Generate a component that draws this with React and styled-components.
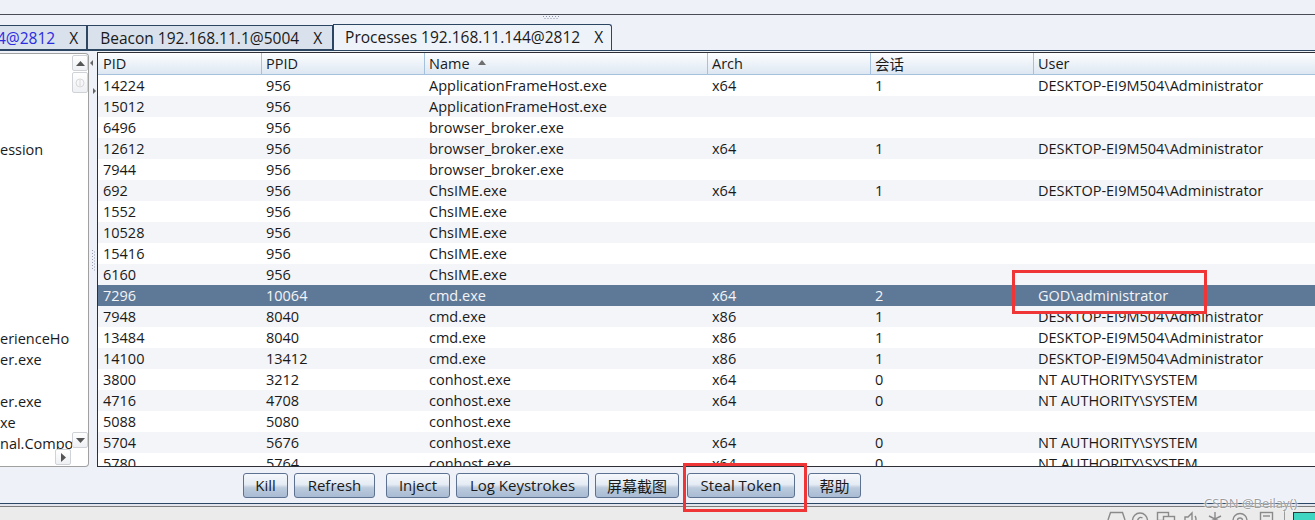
import React from 'react';
import styled, { createGlobalStyle } from 'styled-components';

const UI_FONT = `"Open Sans", "Noto Sans CJK SC", sans-serif`;

const GlobalStyle = createGlobalStyle`
  html, body { margin: 0; padding: 0; }
  body { background: #eef1f8; font-family: ${UI_FONT}; }
`;

const DESK = 'DESKTOP-EI9M504\\Administrator';
const NT = 'NT AUTHORITY\\SYSTEM';

const processes = [
  ['14224', '956', 'ApplicationFrameHost.exe', 'x64', '1', DESK],
  ['15012', '956', 'ApplicationFrameHost.exe', '', '', ''],
  ['6496', '956', 'browser_broker.exe', '', '', ''],
  ['12612', '956', 'browser_broker.exe', 'x64', '1', DESK],
  ['7944', '956', 'browser_broker.exe', '', '', ''],
  ['692', '956', 'ChsIME.exe', 'x64', '1', DESK],
  ['1552', '956', 'ChsIME.exe', '', '', ''],
  ['10528', '956', 'ChsIME.exe', '', '', ''],
  ['15416', '956', 'ChsIME.exe', '', '', ''],
  ['6160', '956', 'ChsIME.exe', '', '', ''],
  ['7296', '10064', 'cmd.exe', 'x64', '2', 'GOD\\administrator'],
  ['7948', '8040', 'cmd.exe', 'x86', '1', DESK],
  ['13484', '8040', 'cmd.exe', 'x86', '1', DESK],
  ['14100', '13412', 'cmd.exe', 'x86', '1', DESK],
  ['3800', '3212', 'conhost.exe', 'x64', '0', NT],
  ['4716', '4708', 'conhost.exe', 'x64', '0', NT],
  ['5088', '5080', 'conhost.exe', '', '', ''],
  ['5704', '5676', 'conhost.exe', 'x64', '0', NT],
  ['5780', '5764', 'conhost.exe', 'x64', '0', NT],
];

const SELECTED = 10;

const listItems = ['', '', '', '', 'ession', '', '', '', '', '', '', '', '', 'erienceHo', 'er.exe', '', 'er.exe', 'xe', 'nal.Compo'];

const buttons = [
  { label: 'Kill', w: 45, ml: 0 },
  { label: 'Refresh', w: 81, ml: 6 },
  { label: 'Inject', w: 64, ml: 11 },
  { label: 'Log Keystrokes', w: 133, ml: 6 },
  { label: '屏幕截图', w: 84, ml: 6 },
  { label: 'Steal Token', w: 108, ml: 8 },
  { label: '帮助', w: 53, ml: 13 },
];

export default function App() {
  return (
    <Frame>
      <GlobalStyle />
      <TopStrip />
      <GripRow>
        <svg width="17" height="3">
          {[0, 3, 6, 9, 12, 15].map(x => (
            <rect key={x} x={x} y="0" width="1" height="1" fill="#8d93a6" />
          ))}
          {[1.5, 4.5, 7.5, 10.5, 13.5].map(x => (
            <rect key={x} x={x} y="2" width="1" height="1" fill="#8d93a6" />
          ))}
        </svg>
      </GripRow>

      <TabBar>
        <Tab $first>
          <TabLabel $blue>4@2812</TabLabel>
          <TabClose>X</TabClose>
        </Tab>
        <Tab>
          <TabLabel>Beacon 192.168.11.1@5004</TabLabel>
          <TabClose>X</TabClose>
        </Tab>
        <Tab $active>
          <TabLabel>Processes 192.168.11.144@2812</TabLabel>
          <TabClose>X</TabClose>
        </Tab>
      </TabBar>

      <Main>
        <ListBox>
          <ListBody>
            <ListItems>
              {listItems.map((t, i) => (
                <ListItem key={i}>{t}</ListItem>
              ))}
            </ListItems>
            <VScroll>
              <ScrollBtn>
                <svg width="9" height="5"><path d="M0 5 L4.5 0 L9 5 Z" fill="#555" /></svg>
              </ScrollBtn>
              <Thumb>
                <svg width="10" height="10">
                  <circle cx="5" cy="5" r="4" fill="none" stroke="#d8d8d8" />
                  <line x1="5" y1="2" x2="5" y2="8" stroke="#d8d8d8" />
                </svg>
              </Thumb>
              <Track />
              <ScrollBtn>
                <svg width="9" height="5"><path d="M0 0 L4.5 5 L9 0 Z" fill="#555" /></svg>
              </ScrollBtn>
            </VScroll>
          </ListBody>
          <HScroll>
            <Track />
            <ScrollBtn>
              <svg width="5" height="9"><path d="M0 0 L5 4.5 L0 9 Z" fill="#555" /></svg>
            </ScrollBtn>
            <Corner />
          </HScroll>
        </ListBox>

        <Splitter>
          <svg width="8" height="415">
            <path d="M4 8 L1 11 L4 14 Z" fill="#666" />
            <path d="M4 36 L7 39 L4 42 Z" fill="#666" />
            {[0, 3, 6, 9, 12, 15, 18].map(y => (
              <g key={y}>
                <rect x="3" y={198 + y} width="1" height="1" fill="#9aa0b0" />
                <rect x="5" y={199.5 + y} width="1" height="1" fill="#9aa0b0" />
              </g>
            ))}
          </svg>
        </Splitter>

        <Table>
          <HeaderRow>
            <HeadCell>PID</HeadCell>
            <HeadCell $sep>PPID</HeadCell>
            <HeadCell $sep>
              Name
              <SortArrow />
            </HeadCell>
            <HeadCell $sep>Arch</HeadCell>
            <HeadCell $sep>会话</HeadCell>
            <HeadCell $sep>User</HeadCell>
          </HeaderRow>
          {processes.map((p, i) => (
            <Row key={p[0]} $odd={i % 2 === 1} $selected={i === SELECTED}>
              {p.map((v, j) => (
                <Cell key={j}>{v}</Cell>
              ))}
            </Row>
          ))}
        </Table>
      </Main>

      <ButtonBar>
        {buttons.map(b => (
          <Button key={b.label} $w={b.w} $ml={b.ml}>
            {b.label}
          </Button>
        ))}
      </ButtonBar>

      <BottomLines />

      <Taskbar>
        <svg width="185" height="13">
          <g fill="none" stroke="#8a8a8a" strokeWidth="1.4">
            <path d="M3 13 L5.5 5.5 H17.5 L20 13" />
            <circle cx="35" cy="13.5" r="7.5" />
            <path d="M37.5 11 A3 3 0 1 0 37.5 16" />
            <rect x="52.5" y="5.5" width="11" height="8" />
            <rect x="58.5" y="9.5" width="11" height="8" fill="#ebebeb" />
            <path d="M80 10 H83 L87 6 V18 L83 14 H80 Z" />
            <path d="M90 9 Q92 12 90 15" />
            <path d="M110 5 V18 M104 9 L116 15 M116 9 L104 15" />
            <circle cx="135" cy="13.5" r="7" />
            <circle cx="135" cy="13.5" r="2.5" />
            <rect x="155.5" y="5.5" width="12" height="10" />
            <path d="M158 9 H165" />
          </g>
          <line x1="179.5" y1="2" x2="179.5" y2="13" stroke="#9a9a9a" />
        </svg>
        <TealSquare />
      </Taskbar>

      <Watermark>CSDN @Beilay()</Watermark>
      <Highlight $x={1012} $y={270} $w={195} $h={44} />
      <Highlight $x={683} $y={463} $w={124} $h={49} />
    </Frame>
  );
}

const Frame = styled.div`
  position: relative;
  display: flex;
  flex-direction: column;
  width: 1315px;
  height: 520px;
  overflow: hidden;
  background: #eef1f8;
  font-family: ${UI_FONT};
  font-size: 14.5px;
  color: #1a1a1a;
`;

const TopStrip = styled.div`
  height: 14px;
  flex: none;
  border-bottom: 1px solid #4a4b57;
`;

const GripRow = styled.div`
  display: flex;
  height: 9px;
  flex: none;
  padding: 1px 0 0 543px;
  box-sizing: border-box;
`;

const TabBar = styled.div`
  display: flex;
  align-items: flex-end;
  height: 26px;
  flex: none;
  border-bottom: 1px solid #2c4561;
  overflow: hidden;
`;

const Tab = styled.div`
  display: flex;
  align-items: center;
  flex: none;
  box-sizing: border-box;
  height: ${p => (p.$active ? 27 : 25)}px;
  margin-bottom: ${p => (p.$active ? -1 : 0)}px;
  margin-left: ${p => (p.$first ? -3 : 0)}px;
  padding: ${p => (p.$first ? '0 8px 0 0' : p.$active ? '0 8px 3px 11px' : '0 10px 0 12px')};
  background: ${p => (p.$active ? '#eef2f9' : '#d8e1ec')};
  border: 1px solid #2c4561;
  border-left: ${p => (p.$first ? 'none' : '1px solid #2c4561')};
  border-bottom: ${p => (p.$active ? 'none' : '1px solid #2c4561')};
  border-radius: ${p => (p.$active ? '0 3px 0 0' : '0')};
  font-size: 15.5px;
  white-space: nowrap;
`;

const TabLabel = styled.span`
  color: ${p => (p.$blue ? '#2b2be0' : '#1a1a1a')};
`;

const TabClose = styled.span`
  margin-left: 14px;
  color: #1a1a1a;
`;

const Main = styled.div`
  display: flex;
  height: 415px;
  flex: none;
  margin-top: 1px;
`;

const ListBox = styled.div`
  display: flex;
  flex-direction: column;
  box-sizing: border-box;
  width: 89px;
  height: 414px;
  margin-top: 1px;
  background: #fff;
  border: 1px solid #a0a0a0;
  border-left: none;
  border-radius: 0 4px 4px 0;
  overflow: hidden;
`;

const ListBody = styled.div`
  display: flex;
  flex: 1;
  min-height: 0;
`;

const ListItems = styled.div`
  flex: 1;
  padding-top: 1px;
  overflow: hidden;
`;

const ListItem = styled.div`
  height: 21px;
  line-height: 21px;
  white-space: nowrap;
  overflow: hidden;
`;

const VScroll = styled.div`
  display: flex;
  flex-direction: column;
  width: 16px;
  padding: 1px 0 1px;
  box-sizing: border-box;
`;

const ScrollBtn = styled.div`
  display: flex;
  align-items: center;
  justify-content: center;
  width: 16px;
  height: 16px;
  flex: none;
  box-sizing: border-box;
  background: linear-gradient(#ffffff, #eef0f3);
  border: 1px solid #cfd2d6;
  border-radius: 2px;
`;

const Thumb = styled(ScrollBtn)`
  height: 21px;
  margin-top: 1px;
`;

const Track = styled.div`
  flex: 1;
`;

const HScroll = styled.div`
  display: flex;
  height: 16px;
  flex: none;
  margin-bottom: 1px;
`;

const Corner = styled.div`
  width: 17px;
`;

const Splitter = styled.div`
  width: 8px;
  flex: none;
`;

const Table = styled.div`
  flex: 1;
  min-width: 0;
  background: #fff;
  border: 1px solid #2e2f36;
  border-right: none;
  overflow: hidden;
`;

const GRID = '163px 163px 283px 163px 163px 1fr';

const HeaderRow = styled.div`
  display: grid;
  grid-template-columns: ${GRID};
  height: 21px;
  background: linear-gradient(#fdfeff, #dde7f2);
  border-bottom: 1px solid #a6c1dc;
`;

const HeadCell = styled.div`
  display: flex;
  align-items: center;
  padding-left: ${p => (p.$sep ? 4 : 5)}px;
  border-left: ${p => (p.$sep ? '1px solid #a6c1dc' : 'none')};
  white-space: nowrap;
`;

const SortArrow = styled.span`
  width: 0;
  height: 0;
  margin: 0 0 2px 8px;
  border-left: 4px solid transparent;
  border-right: 4px solid transparent;
  border-bottom: 5px solid #6f6f6f;
`;

const Row = styled.div`
  display: grid;
  grid-template-columns: ${GRID};
  height: 21px;
  line-height: 21px;
  background: ${p => (p.$selected ? '#5e7897' : p.$odd ? '#f4f5f8' : '#fff')};
  color: ${p => (p.$selected ? '#f2f4f8' : '#1a1a1a')};
`;

const Cell = styled.div`
  padding-left: 5px;
  white-space: nowrap;
  overflow: hidden;
`;

const ButtonBar = styled.div`
  display: flex;
  align-items: center;
  height: 36px;
  flex: none;
  padding-left: 243px;
`;

const Button = styled.button`
  width: ${p => p.$w}px;
  height: 25px;
  margin-left: ${p => p.$ml}px;
  padding: 0;
  box-sizing: border-box;
  border: 1px solid #5d7290;
  border-radius: 3px;
  background: linear-gradient(#f5f8fc 0%, #e6ecf4 45%, #bccbdd 60%, #a8bbd3 100%);
  font-family: ${UI_FONT};
  font-size: 15px;
  color: #1a1a1a;
  white-space: nowrap;
`;

const BottomLines = styled.div`
  height: 2px;
  flex: none;
  background: #e2e6ec;
  border-top: 1px solid #2c4766;
  border-bottom: 1px solid #7c7c7c;
`;

const Taskbar = styled.div`
  display: flex;
  align-items: flex-start;
  flex: 1;
  padding: 0 0 0 1105px;
  background: #ebebeb;
`;

const TealSquare = styled.div`
  width: 22px;
  height: 12px;
  margin: 5px 0 0 3px;
  box-sizing: border-box;
  background: #3ed5c3;
  border: 1px solid #2a3a3a;
  border-right: none;
  border-bottom: none;
`;

const Watermark = styled.div`
  position: absolute;
  left: 1204px;
  top: 494px;
  font-family: ${UI_FONT};
  font-size: 13px;
  color: rgba(140, 140, 140, 0.85);
  text-shadow: 0 0 2px #fff, 0 0 2px #fff;
`;

const Highlight = styled.div`
  position: absolute;
  left: ${p => p.$x}px;
  top: ${p => p.$y}px;
  width: ${p => p.$w}px;
  height: ${p => p.$h}px;
  box-sizing: border-box;
  border: 3px solid #ef3535;
  pointer-events: none;
`;
